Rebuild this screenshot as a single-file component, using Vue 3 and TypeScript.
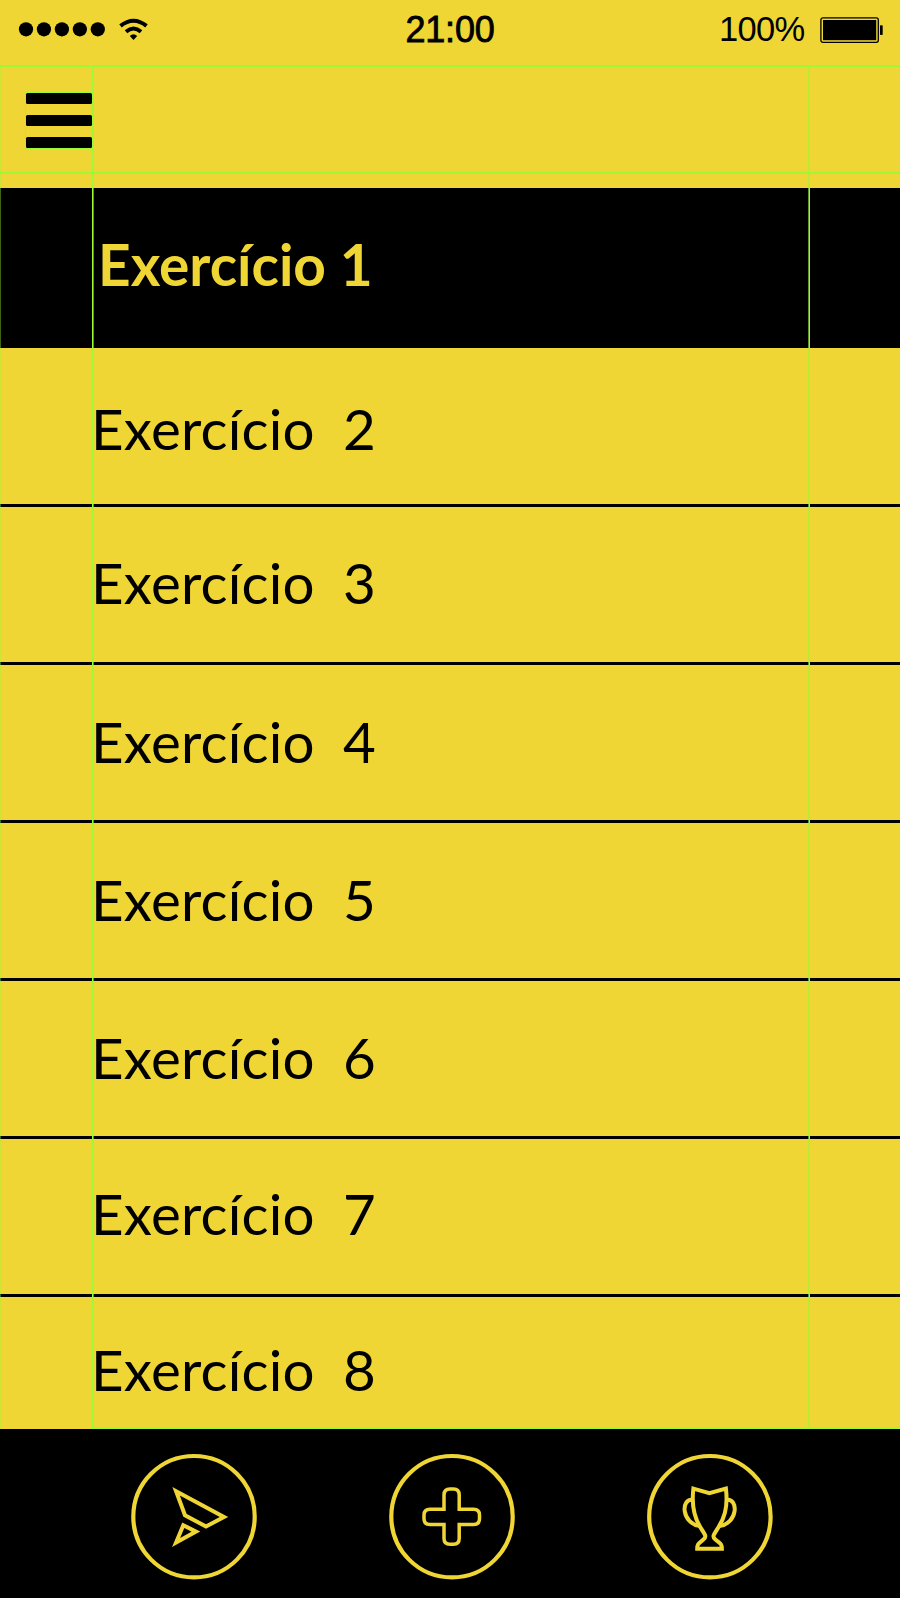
<script setup lang="ts">
interface Exercise {
  id: number
  size: string
}

const exercises: Exercise[] = [
  { id: 2, size: 'row-first' },
  { id: 3, size: 'row-upper' },
  { id: 4, size: 'row-mid' },
  { id: 5, size: 'row-mid' },
  { id: 6, size: 'row-mid' },
  { id: 7, size: 'row-lower' },
  { id: 8, size: 'row-last' },
]
</script>

<template>
  <div class="screen">
    <header class="status">
      <svg class="signal" viewBox="0 0 160 66">
        <circle v-for="n in 5" :key="n" :cx="26 + (n - 1) * 17.95" cy="29.3" r="7.1" />
        <g fill="none" stroke="#000" stroke-width="4">
          <path d="M120.5 25.9Q133.5 15.6 146.5 25.9" />
          <path d="M126 31.7Q133.5 25.4 141 31.7" />
        </g>
        <path d="M129.8 36Q133.5 32.6 137.2 36L133.5 40Z" />
      </svg>
      <span class="time">21:00</span>
      <div class="power">
        <span class="percent">100%</span>
        <svg class="battery" viewBox="0 0 64 28">
          <rect x="0.9" y="1.9" width="57.4" height="24.4" rx="2" fill="none" stroke="#000" stroke-width="1.3" />
          <rect x="3" y="4" width="53.2" height="20.2" />
          <rect x="60" y="9.200" width="2.7" height="9.7" rx="0.7" />
        </svg>
      </div>
    </header>

    <nav class="toolbar">
      <button class="menu" aria-label="Menu">
        <i /><i /><i />
      </button>
    </nav>

    <main class="list">
      <div class="row selected"><span>Exercício 1</span></div>
      <div v-for="item in exercises" :key="item.id" class="row" :class="item.size">
        <span class="label">Exercício</span><span class="number">{{ item.id }}</span>
      </div>
    </main>

    <footer class="tabs">
      <svg viewBox="0 0 130 130">
        <circle cx="65" cy="64.700" r="60.7" stroke-width="4.2" />
        <path d="M47.1 39.2L95 64.9L77 74.5L56 63.3ZM54.3 73.2L67 79.6L47.1 90.5Z" stroke-width="4" />
      </svg>
      <svg viewBox="0 0 130 130">
        <circle cx="65" cy="64.700" r="60.7" stroke-width="4.2" />
        <path d="M57 57.2V43Q57 37 63 37H66.5Q72.2 37 72.2 43V57.2H86.5Q92.5 57.2 92.5 63V66.8Q92.5 72.5 86.5 72.5H72.2V86.5Q72.2 92.3 66.5 92.3H63Q57 92.3 57 86.5V72.5H43Q37 72.5 37 66.8V63Q37 57.2 43 57.2Z" stroke-width="3.5" />
      </svg>
      <svg viewBox="0 0 130 130">
        <circle cx="64.900" cy="64.700" r="60.7" stroke-width="4.2" />
        <g transform="translate(-0.6 -0.4)" stroke-width="4">
          <path d="M49 37L65 41.5L81.5 37C84 57 79 68 73.5 76.5C69 83.5 67.5 85 71 88C75 91.5 77.5 91.5 77.5 97.2H52.8C52.8 91.5 55 91.5 59 88C62.5 85 61 83.5 56.5 76.5C51 68 46.5 57 49 37Z" />
          <path d="M48.5 48.3C36 46.5 37 72 55.5 74.5M82 48.3C94.5 46.5 93.5 72 75 74.5" />
        </g>
      </svg>
    </footer>

    <div class="guides" aria-hidden="true">
      <i class="guide top" />
      <i class="guide bar-end" />
      <i class="guide edge" />
      <i class="guide left" />
      <i class="guide right" />
      <i class="guide bottom" />
    </div>
  </div>
</template>

<style>
body {
  margin: 0;
  background: #efd634;
}
</style>

<style scoped>
.screen {
  position: relative;
  width: 900px;
  height: 1598px;
  overflow: hidden;
  background: #efd634;
  color: #000;
  display: flex;
  flex-direction: column;
}
.status {
  height: 66px;
  flex: none;
  display: grid;
  grid-template-columns: 1fr auto 1fr;
  font-family: "Liberation Sans", Arial, sans-serif;
}
.signal {
  width: 160px;
  height: 66px;
}
.time {
  font-size: 36px;
  line-height: 59px;
  letter-spacing: -0.2px;
  -webkit-text-stroke: 0.8px #000;
}
.power {
  display: flex;
  justify-content: flex-end;
  padding-right: 16px;
}
.percent {
  font-size: 34.5px;
  line-height: 59px;
  letter-spacing: -0.7px;
  margin-right: 15.5px;
}
.battery {
  width: 64px;
  height: 28px;
  margin-top: 16px;
}
.toolbar {
  height: 122.3px;
  flex: none;
}
.menu {
  display: flex;
  flex-direction: column;
  gap: 11.4px;
  box-sizing: border-box;
  width: 69px;
  height: 57px;
  margin: 26px 0 0 25px;
  padding: 0;
  border: 1px solid #9bf936;
  border-right-width: 2px;
  background: none;
}
.menu i {
  height: 10.7px;
  flex: none;
  border-radius: 1.5px;
  background: #000;
}
.list {
  flex: 1;
  min-height: 0;
  overflow: hidden;
}
.row {
  display: flex;
  align-items: baseline;
  box-sizing: border-box;
  height: 158.1px;
  border-bottom: 3px solid #000;
  padding-left: 91px;
  font-family: Lato, "Noto Sans", sans-serif;
  font-size: 56.5px;
  line-height: 152px;
  white-space: pre;
}
.row.selected {
  height: 160px;
  border: 0;
  padding-left: 98px;
  background: #000;
  color: #efd634;
  font-size: 56.8px;
  font-weight: 700;
  line-height: 152px;
}
.row.row-first {
  height: 158.4px;
  line-height: 160px;
}
.row.row-upper {
  line-height: 150px;
}
.row.row-lower {
  line-height: 148px;
}
.row.row-last {
  line-height: 144px;
}
.label {
  width: 252px;
  letter-spacing: 0.2px;
}
.tabs {
  height: 169px;
  flex: none;
  display: flex;
  gap: 127.8px;
  box-sizing: border-box;
  padding: 23px 0 0 129px;
  background: #000;
}
.tabs svg {
  width: 130px;
  height: 130px;
  flex: none;
  fill: none;
  stroke: #efd634;
}
.guide {
  position: absolute;
  background: #9bf936;
}
.top {
  left: 0;
  top: 65px;
  width: 900px;
  height: 2px;
}
.bar-end {
  left: 0;
  top: 172px;
  width: 900px;
  height: 2px;
}
.edge {
  left: 0;
  top: 66px;
  width: 1px;
  height: 1363px;
  opacity: 0.4;
}
.left,
.right {
  top: 66px;
  width: 2px;
  height: 1363px;
}
.left {
  left: 92px;
  background: linear-gradient(to right, #9bf936 50%, #9bf93699 50%);
}
.right {
  left: 808px;
  background: linear-gradient(to left, #9bf936 50%, #9bf93699 50%);
}
.bottom {
  left: 92px;
  top: 1427px;
  width: 808px;
  height: 2px;
}
</style>
